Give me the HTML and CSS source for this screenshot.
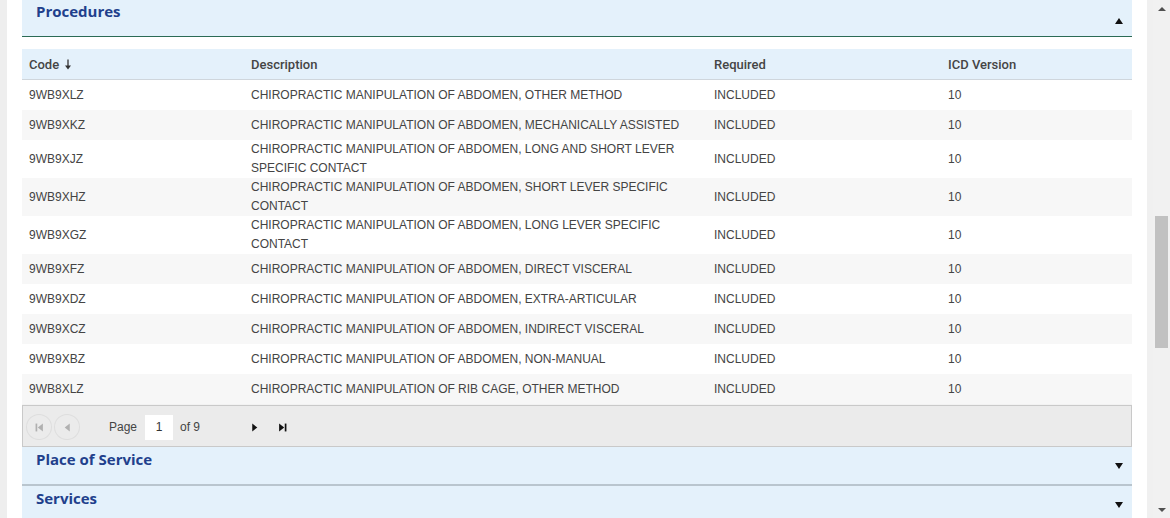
FILE: index.html
```html
<!DOCTYPE html>
<html>
<head>
<meta charset="utf-8">
<link rel="stylesheet" href="styles.css">
</head>
<body>
<div class="shell">
  <div class="panel">
    <div class="section-head open">
      <span class="section-title">Procedures</span>
      <span class="tri up"></span>
    </div>
    <div class="grid">
      <table class="data">
        <colgroup>
          <col class="c-code"><col class="c-desc"><col class="c-req"><col class="c-icd">
        </colgroup>
        <thead>
          <tr>
            <th>Code <svg class="sort" width="8" height="11" viewBox="0 0 8 11"><path d="M4 0.5V9" stroke="#333" stroke-width="1.3" fill="none"/><path d="M1 6.5L4 10.5L7 6.5Z" fill="#333"/></svg></th>
            <th>Description</th>
            <th>Required</th>
            <th>ICD Version</th>
          </tr>
        </thead>
        <tbody>
          <tr><td>9WB9XLZ</td><td>CHIROPRACTIC MANIPULATION OF ABDOMEN, OTHER METHOD</td><td>INCLUDED</td><td>10</td></tr>
          <tr><td>9WB9XKZ</td><td>CHIROPRACTIC MANIPULATION OF ABDOMEN, MECHANICALLY ASSISTED</td><td>INCLUDED</td><td>10</td></tr>
          <tr><td>9WB9XJZ</td><td>CHIROPRACTIC MANIPULATION OF ABDOMEN, LONG AND SHORT LEVER SPECIFIC CONTACT</td><td>INCLUDED</td><td>10</td></tr>
          <tr><td>9WB9XHZ</td><td>CHIROPRACTIC MANIPULATION OF ABDOMEN, SHORT LEVER SPECIFIC CONTACT</td><td>INCLUDED</td><td>10</td></tr>
          <tr><td>9WB9XGZ</td><td>CHIROPRACTIC MANIPULATION OF ABDOMEN, LONG LEVER SPECIFIC CONTACT</td><td>INCLUDED</td><td>10</td></tr>
          <tr><td>9WB9XFZ</td><td>CHIROPRACTIC MANIPULATION OF ABDOMEN, DIRECT VISCERAL</td><td>INCLUDED</td><td>10</td></tr>
          <tr><td>9WB9XDZ</td><td>CHIROPRACTIC MANIPULATION OF ABDOMEN, EXTRA-ARTICULAR</td><td>INCLUDED</td><td>10</td></tr>
          <tr><td>9WB9XCZ</td><td>CHIROPRACTIC MANIPULATION OF ABDOMEN, INDIRECT VISCERAL</td><td>INCLUDED</td><td>10</td></tr>
          <tr><td>9WB9XBZ</td><td>CHIROPRACTIC MANIPULATION OF ABDOMEN, NON-MANUAL</td><td>INCLUDED</td><td>10</td></tr>
          <tr><td>9WB8XLZ</td><td>CHIROPRACTIC MANIPULATION OF RIB CAGE, OTHER METHOD</td><td>INCLUDED</td><td>10</td></tr>
        </tbody>
      </table>
      <div class="pager">
        <span class="pbtn disabled"><svg width="9" height="9" viewBox="0 0 8 8"><rect x="0.5" y="0.5" width="1.5" height="7" fill="#b0b0b0"/><path d="M7 0.5L2.5 4L7 7.5Z" fill="#b0b0b0"/></svg></span>
        <span class="pbtn disabled"><svg width="9" height="9" viewBox="0 0 8 8"><path d="M6 0.5L1.5 4L6 7.5Z" fill="#b0b0b0"/></svg></span>
        <span class="plabel">Page</span>
        <span class="pinput">1</span>
        <span class="pof">of 9</span>
        <span class="pbtn next"><svg width="9" height="9" viewBox="0 0 8 8"><path d="M2 0.5L6.5 4L2 7.5Z" fill="#111"/></svg></span>
        <span class="pbtn"><svg width="9" height="9" viewBox="0 0 8 8"><path d="M1 0.5L5.5 4L1 7.5Z" fill="#111"/><rect x="6" y="0.5" width="1.5" height="7" fill="#111"/></svg></span>
      </div>
    </div>
    <div class="section-head">
      <span class="section-title">Place of Service</span>
      <span class="tri down"></span>
    </div>
    <div class="section-head">
      <span class="section-title">Services</span>
      <span class="tri down"></span>
    </div>
  </div>
  <div class="gutter"></div>
  <div class="scrollbar">
    <span class="sb-arrow sb-up"></span>
    <span class="sb-track"><span class="sb-thumb"></span></span>
    <span class="sb-arrow sb-down"></span>
  </div>
</div>
</body>
</html>
```
FILE: styles.css
```css
html, body {
  margin: 0;
  padding: 0;
  height: 518px;
  overflow: hidden;
  background: #eeeeee;
}
body {
  font-family: "Liberation Sans", Arial, sans-serif;
  font-size: 12px;
  color: #444;
}
.shell {
  display: flex;
  height: 518px;
  padding-left: 7px;
  box-sizing: border-box;
}
.panel {
  width: 1140px;
  background: #ffffff;
  padding: 0 15px;
  box-sizing: border-box;
  overflow: hidden;
}
.gutter {
  width: 6px;
  background: #f0f0f0;
}
.scrollbar {
  width: 17px;
  background: #f1f1f1;
  display: flex;
  flex-direction: column;
  align-items: center;
}
.sb-arrow {
  height: 17px;
  width: 17px;
  display: flex;
  align-items: center;
  justify-content: center;
}
.sb-up::before {
  content: "";
  border-left: 4px solid transparent;
  border-right: 4px solid transparent;
  border-bottom: 4px solid #505050;
}
.sb-down::before {
  content: "";
  border-left: 4px solid transparent;
  border-right: 4px solid transparent;
  border-top: 4px solid #505050;
}
.sb-track {
  flex: 1;
  width: 17px;
  display: flex;
  justify-content: center;
  padding-top: 199px;
  box-sizing: border-box;
}
.sb-thumb {
  width: 13px;
  height: 132px;
  background: #c1c1c1;
}
.section-head {
  background: #e4f1fb;
  height: 39px;
  flex-shrink: 0;
  box-sizing: border-box;
  border-bottom: 2px solid #b9c5ce;
  display: flex;
  justify-content: space-between;
  padding: 1px 9px 0 14px;
}
.section-head.open {
  margin-top: -2px;
  height: 39px;
  border-bottom: 1px solid #2b6b55;
  padding-top: 2px;
}
.section-title {
  font-family: "Open Sans", sans-serif;
  font-weight: 700;
  font-size: 15px;
  line-height: 22px;
  color: #213f8c;
}
.tri {
  width: 0;
  height: 0;
  border-left: 4px solid transparent;
  border-right: 4px solid transparent;
}
.tri.up {
  margin-top: 18px;
  border-bottom: 6px solid #111;
}
.tri.down {
  margin-top: 15px;
  border-top: 6px solid #111;
}
.grid {
  margin-top: 12px;
}
.data {
  width: 100%;
  border-collapse: collapse;
  table-layout: fixed;
}
.c-code { width: 222px; }
.c-desc { width: 463px; }
.c-req { width: 234px; }
.c-icd { width: 191px; }
.data th {
  font-family: Roboto, sans-serif;
  font-weight: 500;
  font-size: 13px;
  color: #454545;
  text-align: left;
  background: #e4f1fb;
  height: 30px;
  padding: 0 7px;
  border-bottom: 1px solid #cfd6dc;
}
.sort {
  vertical-align: -1px;
  margin-left: 2px;
}
.data td {
  height: 30px;
  padding: 0 7px;
  line-height: 19px;
  vertical-align: middle;
  color: #444;
}
.data tbody tr:nth-child(even) td {
  background: #f7f7f7;
}
.data tbody tr:last-child td {
  border-bottom: 1px solid #f2f2f2;
}
.pager {
  display: flex;
  align-items: center;
  height: 42px;
  box-sizing: border-box;
  background: #ebebeb;
  border: 1px solid #c9c9c9;
  padding-left: 3px;
  padding-top: 2px;
}
.pbtn {
  width: 26px;
  height: 26px;
  border-radius: 50%;
  display: flex;
  align-items: center;
  justify-content: center;
  margin-right: 2px;
}
.pbtn.disabled {
  box-shadow: inset 0 0 0 1px #dedede;
}
.plabel {
  margin-left: 27px;
}
.pinput {
  width: 28px;
  height: 25px;
  background: #ffffff;
  display: flex;
  align-items: center;
  justify-content: center;
  margin-left: 8px;
  color: #333;
}
.pof {
  margin-left: 7px;
}
.pbtn.next {
  margin-left: 41px;
}
```
